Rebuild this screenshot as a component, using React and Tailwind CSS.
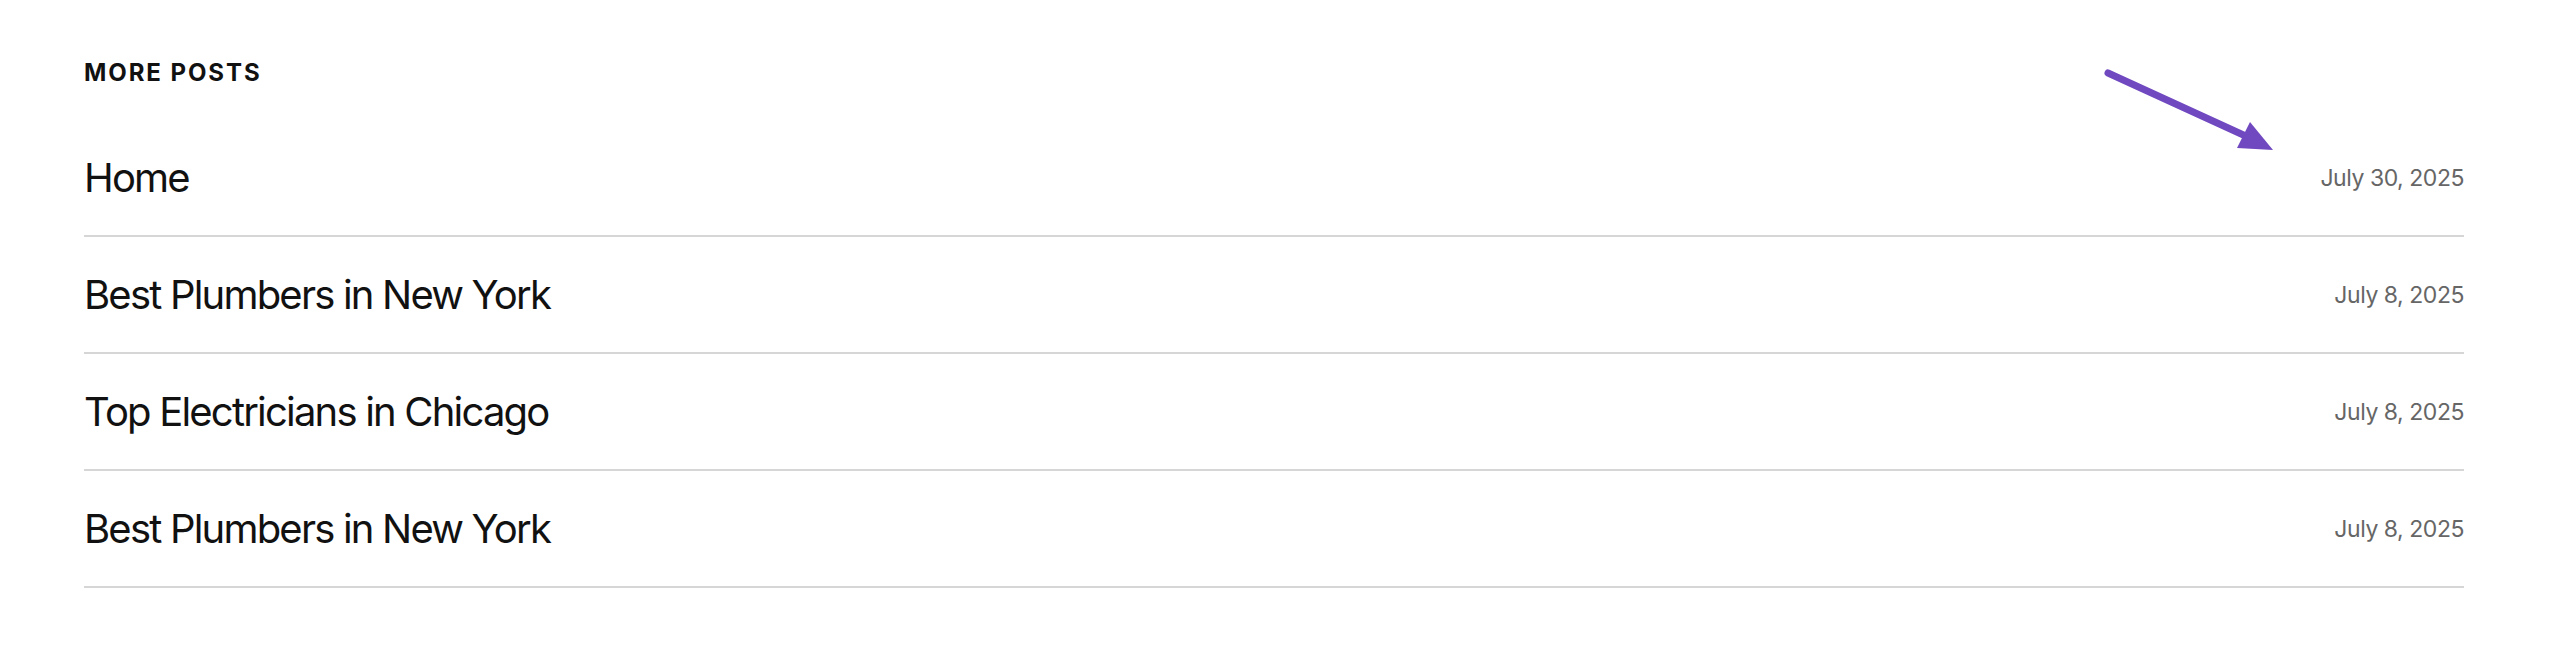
const posts = [
  { title: "Home", date: "July 30, 2025" },
  { title: "Best Plumbers in New York", date: "July 8, 2025" },
  { title: "Top Electricians in Chicago", date: "July 8, 2025" },
  { title: "Best Plumbers in New York", date: "July 8, 2025" },
];

const Arrow = () => (
  <svg
    className="absolute left-[2100px] top-[64px]"
    width="190"
    height="100"
    viewBox="0 0 190 100"
  >
    <line x1="8" y1="9" x2="150" y2="74" stroke="#7048c0" strokeWidth="7" strokeLinecap="round" />
    <polygon points="150,58 173,86 137,84" fill="#7048c0" />
  </svg>
);

export default function App() {
  return (
    <div className="relative min-h-[668px] bg-white font-['Inter',sans-serif] pl-[84px] pr-[96px] pt-[57px]">
      <h2 className="text-[24px] leading-[32px] font-bold tracking-[0.08em] text-[#111] uppercase">
        More Posts
      </h2>
      <ul className="mt-[31px]">
        {posts.map((p, i) => (
          <li
            key={i}
            className="flex h-[117px] items-center justify-between border-b-2 border-[#d6d6d6]"
          >
            <a href="#" className="text-[40px] leading-[48px] tracking-[-0.045em] text-[#111]">
              {p.title}
            </a>
            <span className="text-[23px] leading-[32px] tracking-[-0.02em] text-[#666]">
              {p.date}
            </span>
          </li>
        ))}
      </ul>
      <Arrow />
    </div>
  );
}
